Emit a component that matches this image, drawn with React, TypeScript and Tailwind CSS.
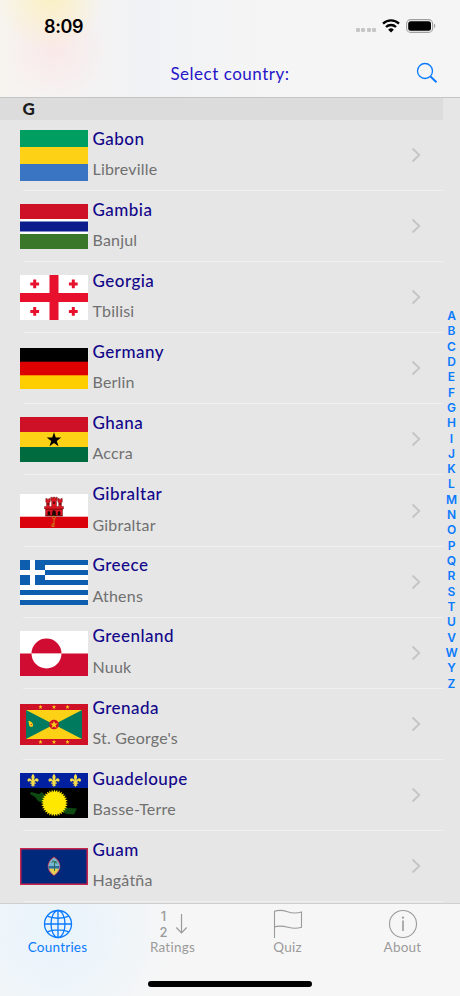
import React from 'react';

const GabonFlag = () => (
  <svg width="68" height="51" viewBox="0 0 68 51" className="block">
    <rect width="68" height="51" fill="#fcd116" />
    <rect width="68" height="17" fill="#009e60" />
    <rect y="34" width="68" height="17" fill="#3a75c4" />
  </svg>
);

const GambiaFlag = () => (
  <svg width="68" height="45" viewBox="0 0 68 45" className="block">
    <rect width="68" height="45" fill="#fff" />
    <rect width="68" height="15" fill="#ce1126" />
    <rect y="17.5" width="68" height="10" fill="#0c1c8c" />
    <rect y="30" width="68" height="15" fill="#3a7728" />
  </svg>
);

const GeorgiaFlag = () => (
  <svg width="68" height="45" viewBox="0 0 68 45" className="block">
    <rect width="68" height="45" fill="#fff" />
    <path d="M29.5 0h9v45h-9zM0 18h68v9H0z" fill="#e8112d" />
    <path
      d="M13.2 4.5h3v2.9h2.9v3h-2.9v2.9h-3v-2.9h-2.9v-3h2.9zM51.8 4.5h3v2.9h2.9v3h-2.9v2.9h-3v-2.9h-2.9v-3h2.9zM13.2 32h3v2.9h2.9v3h-2.9v2.9h-3v-2.9h-2.9v-3h2.9zM51.8 32h3v2.9h2.9v3h-2.9v2.9h-3v-2.9h-2.9v-3h2.9z"
      fill="#e8112d"
    />
  </svg>
);

const GermanyFlag = () => (
  <svg width="68" height="41" viewBox="0 0 68 41" className="block">
    <rect width="68" height="41" fill="#dd0000" />
    <rect width="68" height="13.7" fill="#000" />
    <rect y="27.3" width="68" height="13.7" fill="#ffce00" />
  </svg>
);

const GhanaFlag = () => (
  <svg width="68" height="45" viewBox="0 0 68 45" className="block">
    <rect width="68" height="45" fill="#fcd116" />
    <rect width="68" height="15" fill="#ce1126" />
    <rect y="30" width="68" height="15" fill="#006b3f" />
    <path d="M34 15.3l1.75 5.3h5.5l-4.45 3.3 1.7 5.4L34 26l-4.5 3.3 1.7-5.4-4.45-3.3h5.5z" fill="#000" />
  </svg>
);

const GibraltarFlag = () => (
  <svg width="68" height="34" viewBox="0 0 68 34" className="block">
    <rect width="68" height="34" fill="#fff" />
    <rect y="22.7" width="68" height="11.3" fill="#da000c" />
    <path
      d="M25.8 4.5h1.4v1h1.6v-1h1.4v3.7h-.8v4.300h2.200V6.500h-.8V3.200h1.500v1H33v-1h2v1h.8v-1h1.500v3.300h-.8v6h2.200V8.200h-.8V4.500h1.400v1h1.600v-1h1.400v3.700h-.8v4.300h2v2.500h-1v7H25.500v-7h-1v-2.500h2V8.200h-.7z"
      fill="#dc141f"
      stroke="#5a0a0e"
      strokeWidth="0.4"
    />
    <path d="M25.500 15.200h17M25.500 21.800h17" stroke="#4a0508" strokeWidth="0.7" />
    <path
      d="M27.600 21v-2.400a1.300 1.300 0 0 1 2.600 0V21zM32.200 22v-4a1.800 1.800 0 0 1 3.600 0v4zM37.800 21v-2.400a1.300 1.300 0 0 1 2.600 0V21zM27.600 9h1v2h-1zM33.400 7.500h1.200v2.500h-1.200zM39.600 9h1v2h-1z"
      fill="#1c0808"
    />
    <path d="M34 24.500V32.500M34 30h-2v2.500h2" fill="none" stroke="#d08a18" strokeWidth="0.9" />
    <circle cx="34" cy="23.500" r="1.500" fill="none" stroke="#d08a18" strokeWidth="0.8" />
  </svg>
);

const GreeceFlag = () => (
  <svg width="68" height="45" viewBox="0 0 68 45" className="block">
    <rect width="68" height="45" fill="#fff" />
    <path d="M0 0h68v5H0zM0 10h68v5H0zM0 20h68v5H0zM0 30h68v5H0zM0 40h68v5H0z" fill="#0d5eaf" />
    <rect width="25" height="25" fill="#0d5eaf" />
    <path d="M10 0h5v25h-5zM0 10h25v5H0z" fill="#fff" />
  </svg>
);

const GreenlandFlag = () => (
  <svg width="68" height="45" viewBox="0 0 68 45" className="block">
    <rect width="68" height="45" fill="#fff" />
    <rect y="22.5" width="68" height="22.5" fill="#d00c33" />
    <path d="M11.5 22.500a15 15 0 0 1 30 0z" fill="#d00c33" />
    <path d="M11.5 22.500a15 15 0 0 0 30 0z" fill="#fff" />
  </svg>
);

const STAR = 'M0-2.200l.55 1.500h1.600l-1.300 1 .5 1.600L0 1l-1.350.9.5-1.600-1.300-1h1.600z';

const GrenadaFlag = () => (
  <svg width="68" height="41" viewBox="0 0 68 41" className="block">
    <rect width="68" height="41" fill="#ce1126" />
    <rect x="6" y="6" width="56" height="29" fill="#fcd116" />
    <path d="M6 6l28 14.500L6 35zM62 6L34 20.500 62 35z" fill="#007a5e" />
    <circle cx="34" cy="20.500" r="4.800" fill="#ce1126" />
    <path d={STAR} transform="translate(34 20.700) scale(1.800)" fill="#fcd116" />
    {[20.5, 34, 47.5].map((x) => (
      <g key={x} fill="#fcd116">
        <path d={STAR} transform={`translate(${x} 3)`} />
        <path d={STAR} transform={`translate(${x} 38)`} />
      </g>
    ))}
    <path d="M8.300 17c2.500 0 5 1.700 4.700 5-1.500 1.600-3.800.8-4-1.500 0-1.200-.3-2.300-.7-3.500z" fill="#fcd116" />
    <circle cx="11.200" cy="20.600" r="0.7" fill="#ce1126" />
  </svg>
);

const FLEUR =
  'M0-6.500c1.500 1.700 2.200 3 1.200 5.300L.9.500c1-3.300 4.400-3.300 4.600-.6.100 1.700-1.500 2.100-2.300 1C2.200.900 1.700 1.600 1.500 2.200h1.300v1.300H1.300c0 1 .5 1.400 1.200 1.700L.7 5.500 0 7l-.7-1.500-1.800-.3c.7-.3 1.200-.7 1.200-1.700h-1.500V2.200h1.300C-1.700 1.600-2.200.9-3.200.900c-.8 1.100-2.400.7-2.300-1 .2-2.700 3.600-2.700 4.600.6l-.3-1.700C-2.200-3.500-1.500-4.800 0-6.500z';

const SUN_RAYS = Array.from({ length: 64 }, (_, i) => {
  const angle = (i * Math.PI) / 32;
  const radius = i % 2 === 0 ? 13.5 : 11;
  return `${(34.5 + radius * Math.cos(angle)).toFixed(2)},${(30 + radius * Math.sin(angle)).toFixed(2)}`;
}).join(' ');

const GuadeloupeFlag = () => (
  <svg width="68" height="45" viewBox="0 0 68 45" className="block">
    <rect width="68" height="45" fill="#000" />
    <rect width="68" height="15" fill="#00209f" />
    <path d="M11 19l8 2 3-2 6 7 14 7 6 2 9 .5-3 6-7-.5-8-3-14-7-7-3-3-4-5-3z" fill="#0c4a12" />
    {[13, 34, 55.5].map((x) => (
      <path key={x} d={FLEUR} transform={`translate(${x} 7.200)`} fill="#f5dc4a" />
    ))}
    <polygon points={SUN_RAYS} fill="#ffe800" />
  </svg>
);

const GuamFlag = () => (
  <svg width="68" height="37" viewBox="0 0 68 37" className="block">
    <rect width="68" height="37" fill="#c8234a" />
    <rect x="1.5" y="1.5" width="65" height="34" fill="#00297b" />
    <path d="M34 8.500c8.500 5.500 8.500 14 0 19.500-8.500-5.500-8.500-14 0-19.500z" fill="#c8304a" />
    <path d="M34 9.500c7.500 5 7.500 12.500 0 17.500-7.500-5-7.500-12.500 0-17.500z" fill="#76b8d2" />
    <path d="M29.200 20.500h9.600c-.8 2.600-2.500 4.700-4.800 6.500-2.300-1.800-4-3.900-4.800-6.500z" fill="#e8cf4c" />
    <path d="M28.600 18h10.800v2.500H28.600z" fill="#2c6f9e" />
    <path d="M34.500 23v-9M31.500 14.500c1.500-1.500 5-1.500 6 .5M32.500 12.500l4 3" stroke="#2e7152" strokeWidth="1" fill="none" />
  </svg>
);

const countries = [
  { name: 'Gabon', capital: 'Libreville', Flag: GabonFlag },
  { name: 'Gambia', capital: 'Banjul', Flag: GambiaFlag },
  { name: 'Georgia', capital: 'Tbilisi', Flag: GeorgiaFlag },
  { name: 'Germany', capital: 'Berlin', Flag: GermanyFlag },
  { name: 'Ghana', capital: 'Accra', Flag: GhanaFlag },
  { name: 'Gibraltar', capital: 'Gibraltar', Flag: GibraltarFlag },
  { name: 'Greece', capital: 'Athens', Flag: GreeceFlag },
  { name: 'Greenland', capital: 'Nuuk', Flag: GreenlandFlag },
  { name: 'Grenada', capital: "St. George's", Flag: GrenadaFlag },
  { name: 'Guadeloupe', capital: 'Basse-Terre', Flag: GuadeloupeFlag },
  { name: 'Guam', capital: 'Hagåtña', Flag: GuamFlag },
];

const letters = 'ABCDEFGHIJKLMNOPQRSTUVWYZ'.split('');

const GlobeIcon = () => (
  <svg width="30" height="30" viewBox="0 0 30 30" fill="none" stroke="currentColor" strokeWidth="1.3">
    <circle cx="15" cy="15" r="13.500" />
    <ellipse cx="15" cy="15" rx="7" ry="13.500" />
    <path d="M15 1.500v27M1.500 15h27M4.200 7.200c6 2.700 15.600 2.700 21.600 0M4.200 22.800c6-2.700 15.600-2.700 21.600 0" />
  </svg>
);

const RatingsIcon = () => (
  <div className="flex h-[30px] w-[30px] items-center gap-[7px] pl-[2px]">
    <div className="flex w-2 shrink-0 flex-col items-center font-[Inter] text-[13px] leading-[16px] font-medium">
      <span>1</span>
      <span>2</span>
    </div>
    <svg width="13" height="22" viewBox="0 0 13 22" fill="none" stroke="currentColor" strokeWidth="1.2" className="shrink-0">
      <path d="M6.500 1v19M1.300 14.500l5.200 5.500 5.200-5.500" />
    </svg>
  </div>
);

const FlagIcon = () => (
  <svg width="30" height="30" viewBox="0 0 30 30" fill="none" stroke="currentColor" strokeWidth="1.1">
    <path d="M1.500 29V2.300C5 1 9 .8 14.500 2.700s9 1.900 14 .3v15.300c-4.500 1.500-8.500 1.300-13.500 0s-9.500-1.600-13.500-.4" />
  </svg>
);

const InfoIcon = () => (
  <svg width="30" height="30" viewBox="0 0 30 30" fill="none" stroke="currentColor" strokeWidth="1.1">
    <circle cx="15" cy="15" r="13.500" />
    <path d="M15 11.500v10.500" strokeWidth="1.6" />
    <circle cx="15" cy="8.700" r="1.100" fill="currentColor" stroke="none" />
  </svg>
);

const tabs = [
  { label: 'Countries', Icon: GlobeIcon, active: true },
  { label: 'Ratings', Icon: RatingsIcon, active: false },
  { label: 'Quiz', Icon: FlagIcon, active: false },
  { label: 'About', Icon: InfoIcon, active: false },
];

const StatusBar = () => (
  <div className="flex h-[50px] items-center justify-between pr-[24px] pl-[44px]">
    <span className="pt-[3px] font-[Inter] text-[18px] leading-none font-semibold tracking-[-0.35px] text-black">8:09</span>
    <div className="flex items-center pt-px">
      <div className="mt-[9px] mr-[6px] flex gap-[1.5px]">
        {[0, 1, 2, 3].map((dot) => (
          <span key={dot} className="h-[4px] w-[4px] rounded-[1px] bg-[#c6c6c6]" />
        ))}
      </div>
      <svg width="18" height="14" viewBox="0 0 18 14" fill="none" stroke="#000" strokeWidth="2.3" className="mr-[6px]">
        <path d="M1 4.600a11.500 11.500 0 0 1 16 0M4 8a7.200 7.200 0 0 1 10 0" />
        <path d="M9 13.500L6.200 10.700a4 4 0 0 1 5.600 0z" fill="#000" stroke="none" />
      </svg>
      <svg width="30" height="14" viewBox="0 0 30 14">
        <rect x="0.6" y="0.6" width="26" height="12.8" rx="4" fill="none" stroke="#a0a0a0" strokeWidth="1.1" />
        <rect x="2.2" y="2.2" width="22.8" height="9.6" rx="2.5" fill="#000" />
        <path d="M28 4.800c1.700.6 1.700 3.800 0 4.400z" fill="#a0a0a0" />
      </svg>
    </div>
  </div>
);

const App: React.FC = () => {
  return (
    <div className="flex h-[996px] w-[460px] flex-col overflow-hidden bg-[#e6e6e6] font-[Lato,sans-serif]">
      <header className="h-[98px] shrink-0 border-b border-[#c4c4c4] bg-[#f5f5f5] bg-[radial-gradient(circle_at_50px_-5px,#fbf0c2_0,transparent_55px),radial-gradient(circle_at_55px_48px,#fae9e9_0,transparent_55px),linear-gradient(90deg,#f7f4f0_0,#f1f2f5_150px,#f5f5f5_270px)]">
        <StatusBar />
        <div className="grid h-[47px] grid-cols-[1fr_auto_1fr] items-center">
          <h1 className="col-start-2 pt-px text-[17px] tracking-[0.52px] text-[#2616c8]">Select country:</h1>
          <svg width="22" height="22" viewBox="0 0 22 22" fill="none" stroke="#0a7aff" className="mr-[22px] mb-px justify-self-end">
            <circle cx="9" cy="9" r="7.500" strokeWidth="1.3" />
            <path d="M14.500 14.500l6 5.700" strokeWidth="1.9" />
          </svg>
        </div>
      </header>

      <main className="flex h-[805px] shrink-0">
        <div className="w-[443px]">
          <h2 className="flex h-[22px] items-center bg-[#dcdcdc] pb-[2px] pl-[22.5px] text-[17px] leading-none font-black text-[#1c1c1c]">G</h2>
          <ul>
            {countries.map(({ name, capital, Flag }) => (
              <li key={name} className="ml-[23px] flex h-[71.1px] items-center border-b border-[#f0f0f0]">
                <div className="-ml-[3px] w-[68px] shrink-0 pt-px">
                  <Flag />
                </div>
                <div className="flex-1 pb-[2px] pl-[4.5px] leading-[30.3px] whitespace-nowrap">
                  <p className="text-[17px] font-medium tracking-[0.47px] text-[#13078a]">{name}</p>
                  <p className="text-[16px] tracking-[0.2px] text-[#707070]">{capital}</p>
                </div>
                <svg width="10" height="16" viewBox="0 0 10 16" fill="none" stroke="#c5c5c7" strokeWidth="1.9" className="mr-[22px]">
                  <path d="M1.500 1.500L8.300 8l-6.800 6.500" />
                </svg>
              </li>
            ))}
          </ul>
        </div>
        <nav className="flex w-[17px] flex-col items-center pt-[210px] font-[Inter] text-[12px] leading-[15.32px] font-semibold text-[#0a7aff]">
          {letters.map((letter) => (
            <span key={letter}>{letter}</span>
          ))}
        </nav>
      </main>

      <footer className="flex flex-1 flex-col border-t border-[#cfcfcf] bg-[#f6f6f6] bg-[radial-gradient(circle_at_55px_25px,#e7f3fb_0,#eef5fa_55px,transparent_120px)]">
        <div className="grid grid-cols-4">
          {tabs.map(({ label, Icon, active }) => (
            <div
              key={label}
              className={`flex flex-col items-center pt-[5px] ${active ? 'text-[#0a7aff]' : 'text-[#9b9b9b]'}`}
            >
              <Icon />
              <span className="text-[13.5px] leading-[16px] tracking-[0.25px]">{label}</span>
            </div>
          ))}
        </div>
        <div className="mt-auto mb-[9px] h-[6px] w-[164px] self-center rounded-full bg-black" />
      </footer>
    </div>
  );
};

export default App;
